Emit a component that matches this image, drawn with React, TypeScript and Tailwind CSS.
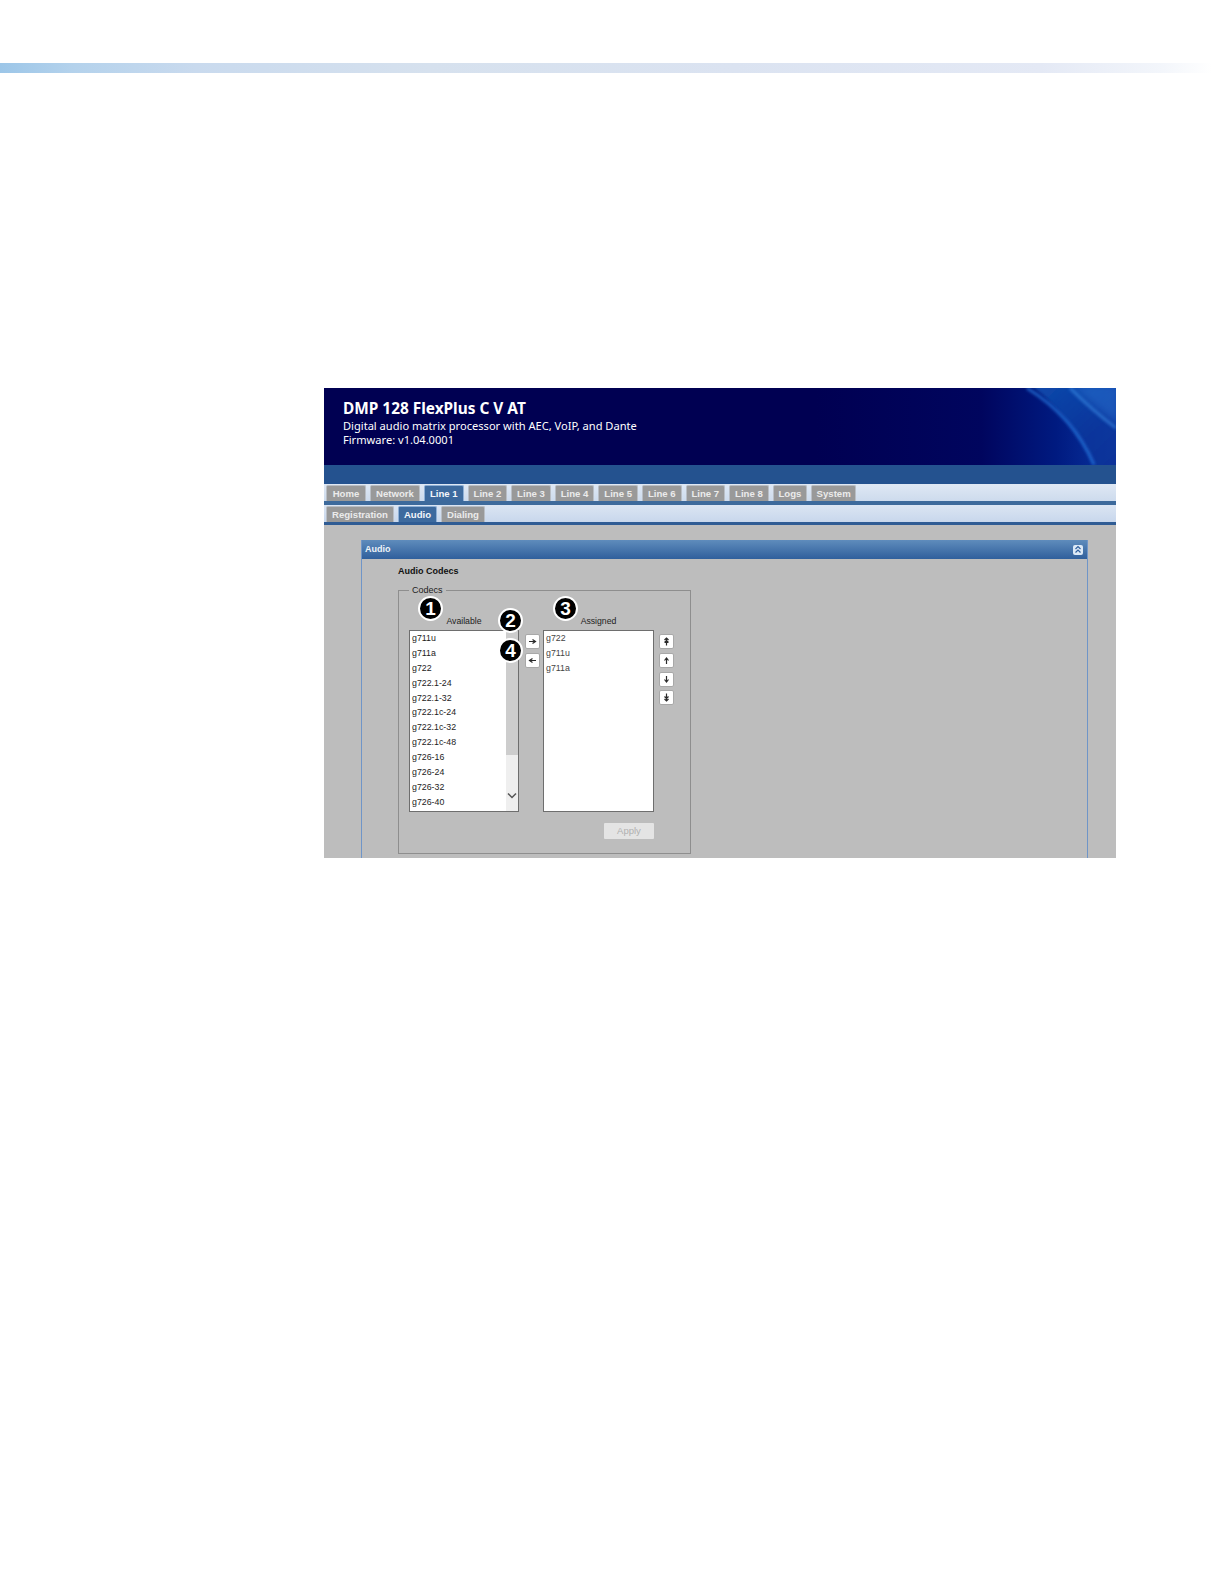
const mainTabs = [
  ["Home", 40],
  ["Network", 50],
  ["Line 1", 39.6],
  ["Line 2", 39.6],
  ["Line 3", 39.6],
  ["Line 4", 39.6],
  ["Line 5", 39.6],
  ["Line 6", 39.6],
  ["Line 7", 39.6],
  ["Line 8", 39.6],
  ["Logs", 34.4],
  ["System", 45],
] as const;
const subTabs = [
  ["Registration", 68],
  ["Audio", 39],
  ["Dialing", 44],
] as const;
const available = ["g711u", "g711a", "g722", "g722.1-24", "g722.1-32", "g722.1c-24", "g722.1c-32", "g722.1c-48", "g726-16", "g726-24", "g726-32", "g726-40"];
const assigned = ["g722", "g711u", "g711a"];

function Tab({ label, width, active }: { label: string; width: number; active: boolean }) {
  return (
    <div
      style={{ width }}
      className={`flex h-full shrink-0 items-center justify-center rounded-t-[2px] border-x border-t font-['Liberation_Sans',sans-serif] text-[9.6px] leading-none font-bold ${
        active ? "border-[#8fb0d6] bg-[#3d6a9e] text-[#f4f7fb]" : "border-[#b9bec5] bg-[#999999] text-[#ebebeb]"
      }`}
    >
      {label}
    </div>
  );
}

function Badge({ n, className }: { n: number; className: string }) {
  return (
    <div
      className={`absolute flex h-[25px] w-[25px] items-center justify-center rounded-full border-2 border-white bg-black font-['Liberation_Sans',sans-serif] text-[19px] leading-none font-bold text-white ${className}`}
    >
      {n}
    </div>
  );
}

function SmallButton({ d }: { d: string }) {
  return (
    <div className="flex h-[15px] w-[15px] items-center justify-center rounded-[2px] border border-[#a8a8a8] bg-white">
      <svg width="9" height="9" viewBox="0 0 9 9" fill="none" stroke="#2a2a2a" strokeWidth="1.2">
        <path d={d} />
      </svg>
    </div>
  );
}

function CodecList({ items, tone }: { items: readonly string[]; tone: string }) {
  return (
    <div className={`flex flex-col pl-[2px] font-['Liberation_Sans',sans-serif] ${tone}`}>
      {items.map((c) => (
        <div key={c} className="h-[14.9px] text-[8.8px] leading-[14.9px]">
          {c}
        </div>
      ))}
    </div>
  );
}

export default function App() {
  return (
    <div className="h-[1584px] w-[1224px] overflow-hidden bg-white pt-[63px] font-['Liberation_Sans',sans-serif]">
      <div className="h-[10px] w-full bg-[linear-gradient(90deg,#9cc6e8_0%,#b4d2ec_6%,#c9daee_16%,#d6e1ee_35%,#dbe3f1_60%,#e4e9f5_85%,#f3f6fb_95%,#ffffff_99%)]" />
      <div className="mt-[315px] ml-[324px] w-[792px]">
        <div className="relative h-[77px] overflow-hidden bg-[#000052] pt-[11px] pl-[19px] text-white">
          <svg className="absolute top-0 right-0" width="300" height="77" viewBox="0 0 300 77" fill="none">
            <defs>
              <linearGradient id="hdr" x1="0" x2="1" y1="0" y2="0">
                <stop offset="0" stopColor="#000052" />
                <stop offset="0.55" stopColor="#00055e" />
                <stop offset="0.8" stopColor="#001a80" />
                <stop offset="1" stopColor="#0a35a0" />
              </linearGradient>
              <linearGradient id="sw" x1="0" x2="1" y1="0" y2="1">
                <stop offset="0" stopColor="#1560c0" />
                <stop offset="0.6" stopColor="#0a3aa0" />
                <stop offset="1" stopColor="#083096" />
              </linearGradient>
              <filter id="soft" x="-20%" y="-20%" width="140%" height="140%">
                <feGaussianBlur stdDeviation="1.6" />
              </filter>
              <filter id="softer" x="-20%" y="-20%" width="140%" height="140%">
                <feGaussianBlur stdDeviation="4" />
              </filter>
            </defs>
            <rect width="300" height="77" fill="url(#hdr)" />
            <path d="M211 -6C240 16 265 44 281 83H306V-6Z" fill="url(#sw)" opacity="0.75" filter="url(#soft)" />
            <path d="M254 -4C266 8 284 24 304 38V-4Z" fill="#2f7ad8" opacity="0.45" filter="url(#softer)" />
            <path d="M211 0C240 18 264 44 278 77" stroke="#2a80e6" strokeWidth="3" opacity="0.7" filter="url(#soft)" />
            <path d="M254 0C268 14 284 28 300 40" stroke="#3f94ec" strokeWidth="2.5" opacity="0.6" filter="url(#soft)" />
          </svg>
          <div className="relative font-['Noto_Sans',sans-serif] text-[15.4px] leading-[19px] font-bold">DMP 128 FlexPlus C V AT</div>
          <div className="relative mt-[1px] font-['Noto_Sans',sans-serif] text-[11.1px] leading-[14px]">Digital audio matrix processor with AEC, VoIP, and Dante</div>
          <div className="relative font-['Noto_Sans',sans-serif] text-[11.1px] leading-[14px]">Firmware: v1.04.0001</div>
        </div>
        <div className="h-[19px] bg-[#24528f]" />
        <div className="flex h-[17px] gap-[4px] bg-[linear-gradient(180deg,#dfe8f4,#cddbed)] pt-[1px] pl-[2px]">
          {mainTabs.map(([t, w]) => (
            <Tab key={t} label={t} width={w} active={t === "Line 1"} />
          ))}
        </div>
        <div className="h-[4px] bg-[#3d6a9c]" />
        <div className="flex h-[17px] gap-[4px] bg-[linear-gradient(180deg,#dbe5f3,#c8d7ec)] pt-[1px] pl-[2px]">
          {subTabs.map(([t, w]) => (
            <Tab key={t} label={t} width={w} active={t === "Audio"} />
          ))}
        </div>
        <div className="h-[3px] bg-[#2f5c94]" />
        <div className="h-[333px] overflow-hidden bg-[#bdbdbd] pt-[15px] pl-[37px]">
          <div className="h-[330px] w-[727px] border-x border-[#6f95c8]">
            <div className="flex h-[19px] items-center justify-between bg-[linear-gradient(180deg,#5f8cbc,#2f5f9c)] pr-[4px] pl-[3px] text-[9px] font-bold text-[#eef3f8]">
              <span>Audio</span>
              <div className="flex h-[10px] w-[10px] items-center justify-center rounded-[2px] bg-[#dce9f6]">
                <svg width="8" height="9" viewBox="0 0 8 9" fill="none" stroke="#2f5f9c" strokeWidth="1.200">
                  <path d="M1.500 4 4 1.500 6.500 4M1.500 7.500 4 5 6.500 7.500" />
                </svg>
              </div>
            </div>
            <div className="pt-[5px] pl-[36px]">
              <div className="h-[14px] text-[9px] leading-[14px] font-bold text-[#111]">Audio Codecs</div>
              <div className="relative mt-[12px] h-[264px] w-[293px] border border-[#8e8e8e]">
                <div className="absolute -top-[7px] left-[10px] bg-[#bdbdbd] px-[3px] text-[9px] leading-[13px] text-[#222]">Codecs</div>
                <div className="flex pt-[24px] pl-[10px]">
                  <div className="w-[110px]">
                    <div className="h-[15px] text-center text-[8.700px] leading-[12px] text-[#222]">Available</div>
                    <div className="relative h-[182px] border border-[#6e6e6e] bg-white">
                      <CodecList items={available} tone="text-[#1c1c1c]" />
                      <div className="absolute top-0 right-0 bottom-0 flex w-[12px] flex-col bg-[#efefef]">
                        <div className="h-[124px] bg-[#cdcdcd]" />
                        <div className="flex flex-1 items-end justify-center pb-[12px]">
                          <svg width="10" height="7" viewBox="0 0 10 7" fill="none" stroke="#555" strokeWidth="1.500">
                            <path d="M1 1.500 5 5.500 9 1.500" />
                          </svg>
                        </div>
                      </div>
                    </div>
                  </div>
                  <div className="ml-[6px] flex w-[15px] flex-col gap-[4px] pt-[19px]">
                    <SmallButton d="M1 4.500H7M4.500 2.500 7.500 4.500 4.500 6.500" />
                    <SmallButton d="M8 4.500H2M4.500 2.500 1.500 4.500 4.500 6.500" />
                  </div>
                  <div className="ml-[3px] w-[111px]">
                    <div className="h-[15px] text-center text-[8.700px] leading-[12px] text-[#222]">Assigned</div>
                    <div className="h-[182px] border border-[#6e6e6e] bg-white">
                      <CodecList items={assigned} tone="text-[#444]" />
                    </div>
                  </div>
                  <div className="ml-[5px] flex w-[15px] flex-col gap-[3.800px] pt-[19px]">
                    <SmallButton d="M4.500 8.500V1M2.500 5.500 4.500 3.500 6.500 5.500M2.500 3 4.500 1 6.500 3" />
                    <SmallButton d="M4.500 8V2M2.500 4.500 4.500 2 6.500 4.500" />
                    <SmallButton d="M4.500 1V7M2.500 4.500 4.500 7 6.500 4.500" />
                    <SmallButton d="M4.500 .5V8M2.500 3.500 4.500 5.500 6.500 3.500M2.500 6 4.500 8 6.500 6" />
                  </div>
                </div>
                <div className="mt-[11px] ml-[205px] flex h-[16px] w-[50px] items-center justify-center rounded-[1px] bg-[#e4e4e4] text-[9.500px] text-[#b0b0b0]">
                  Apply
                </div>
                <Badge n={1} className="top-[5px] left-[19px]" />
                <Badge n={2} className="top-[17px] left-[99px]" />
                <Badge n={3} className="top-[5px] left-[154px]" />
                <Badge n={4} className="top-[47px] left-[99px]" />
              </div>
            </div>
          </div>
        </div>
      </div>
    </div>
  );
}
